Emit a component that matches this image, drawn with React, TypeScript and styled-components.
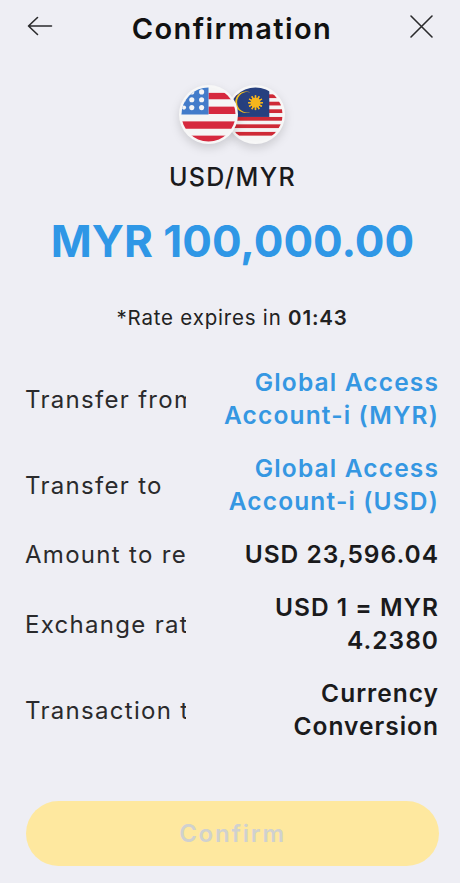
import React from "react";
import styled, { createGlobalStyle } from "styled-components";

const GlobalStyle = createGlobalStyle`
  html, body {
    margin: 0;
    padding: 0;
    background: #eeeef4;
  }
  * { box-sizing: border-box; }
`;

const Screen = styled.div`
  width: 460px;
  height: 883px;
  background: #eeeef4;
  font-family: Inter, "Noto Sans", sans-serif;
  color: #1c1c1e;
  display: flex;
  flex-direction: column;
  overflow: hidden;
`;

const Header = styled.header`
  height: 56px;
  padding: 0 26px;
  display: flex;
  align-items: center;
  justify-content: space-between;
`;

const IconButton = styled.button`
  width: 28px;
  height: 28px;
  margin-bottom: 4px;
  padding: 0;
  border: 0;
  background: none;
  display: flex;
  color: #2a2a2c;
`;

const Title = styled.h1`
  margin: 0;
  padding-left: 4px;
  font-size: 29px;
  font-weight: 600;
  letter-spacing: 1.4px;
  color: #111;
`;

const Pair = styled.section`
  display: flex;
  flex-direction: column;
  align-items: center;
  padding-top: 29px;
`;

const Flags = styled.div`
  display: flex;
  height: 59px;
  padding-left: 4px;
`;

const Flag = styled.svg<{ $front?: boolean }>`
  width: 59px;
  height: 59px;
  margin-left: ${(p) => (p.$front ? "0" : "-12px")};
  position: relative;
  z-index: ${(p) => (p.$front ? 1 : 0)};
  filter: drop-shadow(0 4px 5px rgba(0, 0, 0, 0.14));
`;

const PairLabel = styled.div`
  margin-top: 17px;
  padding-left: 5px;
  font-size: 25px;
  line-height: 32px;
  font-weight: 500;
  letter-spacing: 1.4px;
  color: #1a1a1c;
`;

const Amount = styled.div`
  margin-top: 20px;
  padding-left: 5px;
  text-align: center;
  font-size: 44px;
  line-height: 56px;
  font-weight: 700;
  color: #2f97e6;
`;

const Expiry = styled.div`
  margin-top: 35px;
  padding-left: 4px;
  text-align: center;
  font-size: 20.5px;
  line-height: 28px;
  letter-spacing: 0.8px;
  color: #222;

  b {
    font-weight: 600;
  }
`;

const Details = styled.dl`
  margin: 34px 0 0;
  padding: 0 21px 0 25px;
  display: flex;
  flex-direction: column;
  gap: 20px;
`;

const Row = styled.div`
  display: flex;
  align-items: center;
  justify-content: space-between;
`;

const Label = styled.dt`
  width: 161px;
  flex: none;
  overflow: hidden;
  white-space: nowrap;
  font-size: 24px;
  line-height: 33px;
  letter-spacing: 1.3px;
  color: #2a2a2c;
`;

const Value = styled.dd<{ $link?: boolean }>`
  margin: 0;
  width: 240px;
  text-align: right;
  font-size: 24.5px;
  line-height: 33px;
  font-weight: 600;
  letter-spacing: ${(p) => (p.$link ? "1.15px" : "1px")};
  color: ${(p) => (p.$link ? "#3597e2" : "#1a1a1c")};
`;

const Footer = styled.div`
  margin-top: auto;
  padding: 0 21px 17px 26px;
`;

const ConfirmButton = styled.button`
  width: 100%;
  height: 65px;
  border: 0;
  border-radius: 33px;
  background: #fee89f;
  color: #d0d1cf;
  font-family: inherit;
  font-size: 24px;
  font-weight: 600;
  letter-spacing: 1.8px;
`;

const rows: { label: string; value: React.ReactNode; link?: boolean }[] = [
  { label: "Transfer from", value: <>Global Access<br />Account-i (MYR)</>, link: true },
  { label: "Transfer to", value: <>Global Access<br />Account-i (USD)</>, link: true },
  { label: "Amount to receive", value: "USD 23,596.04" },
  { label: "Exchange rate", value: <>USD 1 = MYR<br />4.2380</> },
  { label: "Transaction type", value: <>Currency<br />Conversion</> },
];

function UsFlag() {
  return (
    <Flag $front viewBox="0 0 60 60">
      <defs>
        <clipPath id="us-clip">
          <circle cx="30" cy="30" r="27.5" />
        </clipPath>
      </defs>
      <circle cx="30" cy="30" r="30" fill="#f7f7f7" />
      <g clipPath="url(#us-clip)">
        <rect x="0" y="0" width="60" height="60" fill="#f5f5f5" />
        <rect x="30" y="8" width="30" height="6.5" fill="#d6293e" />
        <rect x="30" y="22" width="30" height="7.5" fill="#d6293e" />
        <rect x="0" y="37" width="60" height="7.5" fill="#d6293e" />
        <rect x="0" y="51.5" width="60" height="8.5" fill="#d6293e" />
        <rect x="0" y="0" width="30" height="30" fill="#437cca" />
        {[7, 15, 23].map((y) =>
          [13, 23].map((x) => <circle key={`${x}-${y}`} cx={x} cy={y} r="2.6" fill="#f5f5f5" />)
        )}
        <circle cx="5" cy="15" r="2.2" fill="#f5f5f5" />
        <circle cx="5" cy="23" r="2.2" fill="#f5f5f5" />
      </g>
    </Flag>
  );
}

function MyFlag() {
  const rays = Array.from({ length: 12 }, (_, i) => i * 30);
  return (
    <Flag viewBox="0 0 60 60">
      <defs>
        <clipPath id="my-clip">
          <circle cx="30" cy="30" r="27.5" />
        </clipPath>
      </defs>
      <circle cx="30" cy="30" r="30" fill="#f7f7f7" />
      <g clipPath="url(#my-clip)">
        <rect x="0" y="0" width="60" height="60" fill="#f5f5f5" />
        {[9.5, 17, 24.7, 32.5, 40, 47.7].map((y) => (
          <rect key={y} x="0" y={y} width="60" height="3.8" fill="#cf2a36" />
        ))}
        <rect x="0" y="0" width="44" height="32.5" fill="#27407f" />
        <path d="M25 7.5a11 11 0 1 0 0 20a10.5 10.5 0 1 1 0-20z" fill="#f5c11f" />
        {rays.map((a) => (
          <rect key={a} x="29.3" y="10.5" width="1.4" height="15" fill="#f7b51c" transform={`rotate(${a} 30 18)`} />
        ))}
        <circle cx="30" cy="18" r="5" fill="#f7b51c" />
      </g>
    </Flag>
  );
}

export default function App() {
  return (
    <Screen>
      <GlobalStyle />
      <Header>
        <IconButton aria-label="Back">
          <svg width="28" height="28" viewBox="0 0 28 28" fill="none" stroke="currentColor" strokeWidth="1.6" strokeLinecap="round" strokeLinejoin="round">
            <path d="M2.5 14h23M11.5 5.5 2.5 14l9 8.5" />
          </svg>
        </IconButton>
        <Title>Confirmation</Title>
        <IconButton aria-label="Close">
          <svg width="28" height="28" viewBox="0 0 28 28" fill="none" stroke="currentColor" strokeWidth="1.6" strokeLinecap="round">
            <path d="M5 4l21 21M26 4 5 25" />
          </svg>
        </IconButton>
      </Header>
      <Pair>
        <Flags>
          <UsFlag />
          <MyFlag />
        </Flags>
        <PairLabel>USD/MYR</PairLabel>
      </Pair>
      <Amount>MYR 100,000.00</Amount>
      <Expiry>*Rate expires in <b>01:43</b></Expiry>
      <Details>
        {rows.map((r) => (
          <Row key={r.label}>
            <Label>{r.label}</Label>
            <Value $link={r.link}>{r.value}</Value>
          </Row>
        ))}
      </Details>
      <Footer>
        <ConfirmButton disabled>Confirm</ConfirmButton>
      </Footer>
    </Screen>
  );
}
